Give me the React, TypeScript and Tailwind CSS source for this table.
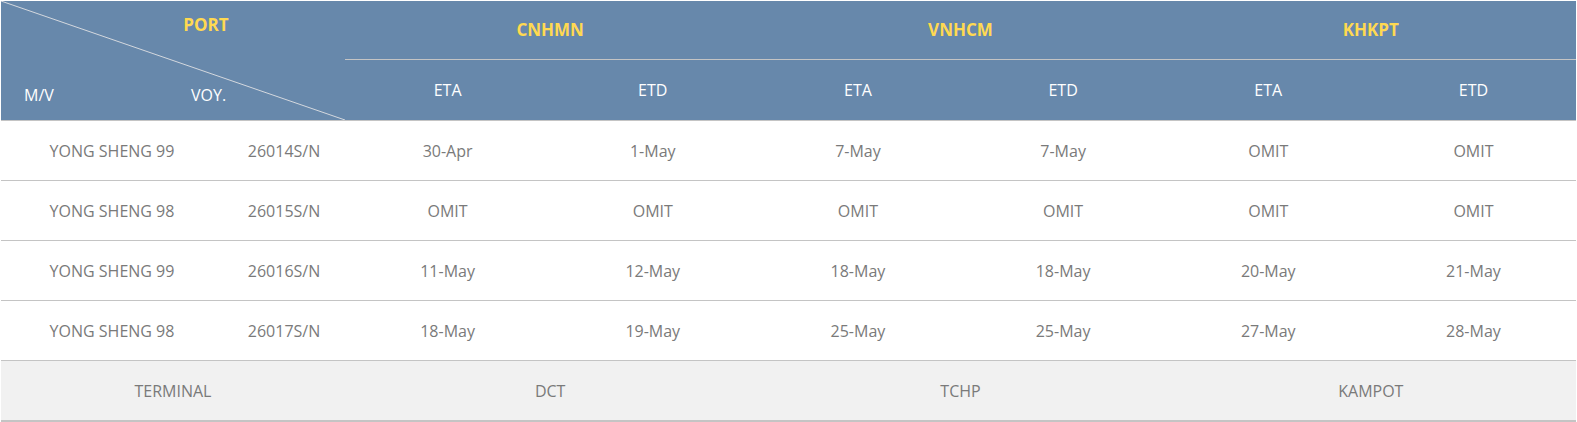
import React from 'react';

type Row = { vessel: string; voy: string; dates: string[] };

const ports = ['CNHMN', 'VNHCM', 'KHKPT'];
const terminals = ['DCT', 'TCHP', 'KAMPOT'];

const rows: Row[] = [
  { vessel: 'YONG SHENG 99', voy: '26014S/N', dates: ['30-Apr', '1-May', '7-May', '7-May', 'OMIT', 'OMIT'] },
  { vessel: 'YONG SHENG 98', voy: '26015S/N', dates: ['OMIT', 'OMIT', 'OMIT', 'OMIT', 'OMIT', 'OMIT'] },
  { vessel: 'YONG SHENG 99', voy: '26016S/N', dates: ['11-May', '12-May', '18-May', '18-May', '20-May', '21-May'] },
  { vessel: 'YONG SHENG 98', voy: '26017S/N', dates: ['18-May', '19-May', '25-May', '25-May', '27-May', '28-May'] },
];

const App: React.FC = () => {
  return (
    <div className="p-px bg-white" style={{ fontFamily: '"Open Sans", "Noto Sans", sans-serif' }}>
      <div className="w-[1575px] text-[16px]">
        {/* header */}
        <div className="flex bg-[#6788ab] border-b border-[#c4c4c4]">
          <div className="relative w-[344px] h-[119px] shrink-0">
            <svg className="absolute inset-0" width="344" height="119" viewBox="0 0 344 119">
              <line x1="0" y1="0" x2="344" y2="119" stroke="#d4d8de" strokeWidth="1" />
            </svg>
            <div className="absolute left-0 top-[11px] w-[410px] text-center font-bold text-[17px] text-[#ffd951]">PORT</div>
            <div className="absolute left-[23px] top-[82px] text-white">M/V</div>
            <div className="absolute left-[190px] top-[82px] text-white">VOY.</div>
          </div>
          <div className="flex-1 flex flex-col">
            <div className="h-[59px] flex border-b border-[#c4c4c4]">
              {ports.map(p => (
                <div key={p} className="flex-1 flex items-center justify-center font-bold text-[17px] text-[#ffd951] pb-[1px]">{p}</div>
              ))}
            </div>
            <div className="h-[60px] flex">
              {ports.flatMap(p => ['ETA', 'ETD'].map(t => (
                <div key={p + t} className="flex-1 flex items-center justify-center text-white pb-[1px]">{t}</div>
              )))}
            </div>
          </div>
        </div>

        {/* body */}
        {rows.map((r, i) => (
          <div key={i} className="flex h-[60px] border-b border-[#c4c4c4] text-[#7a7a7a]">
            <div className="w-[222px] shrink-0 flex items-center justify-center">{r.vessel}</div>
            <div className="w-[122px] shrink-0 flex items-center justify-center">{r.voy}</div>
            {r.dates.map((d, j) => (
              <div key={j} className="flex-1 flex items-center justify-center">{d}</div>
            ))}
          </div>
        ))}

        {/* terminals */}
        <div className="flex h-[61px] bg-[#f1f1f1] border-b-2 border-[#c4c4c4] text-[#7a7a7a]">
          <div className="w-[344px] shrink-0 flex items-center justify-center">TERMINAL</div>
          {terminals.map(t => (
            <div key={t} className="flex-1 flex items-center justify-center">{t}</div>
          ))}
        </div>
      </div>
    </div>
  );
};

export default App;
